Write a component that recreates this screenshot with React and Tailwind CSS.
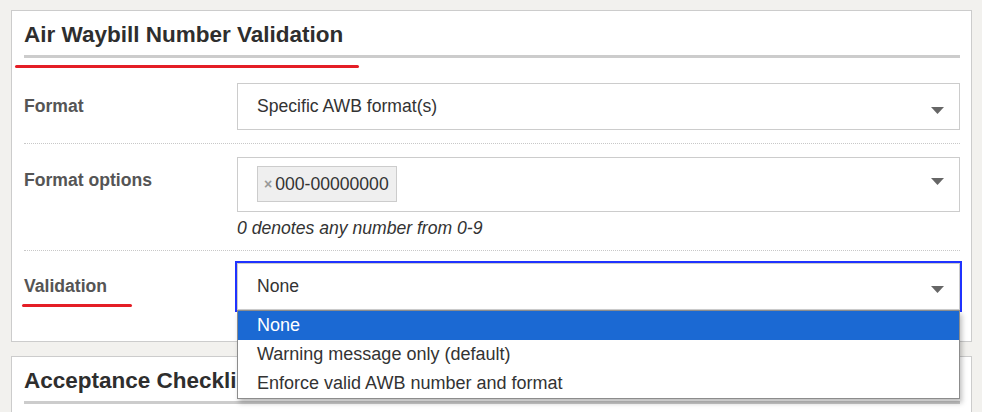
const Caret = ({ top }) => (
  <svg
    className="absolute right-[15px]"
    style={{ top }}
    width="13"
    height="7"
    viewBox="0 0 13 7"
  >
    <polygon points="0,0 13,0 6.5,7" fill="#666" />
  </svg>
);

const Select = ({ children, className = "", caretTop = 23 }) => (
  <div className={`relative border border-[#ccc] bg-white ${className}`}>
    {children}
    <Caret top={caretTop} />
  </div>
);

const Row = ({ label, children, className = "" }) => (
  <div className={`flex ${className}`}>
    <div className="w-[213px] shrink-0 pt-[11px] leading-[24px] font-bold text-[#555]">
      {label}
    </div>
    <div className="flex-1">{children}</div>
  </div>
);

export default function App() {
  return (
    <div className="min-h-screen bg-[#f2f1ee] pt-[10px] pl-[11px] pr-[10px] font-['Liberation_Sans',Arial,sans-serif] text-[17.6px] text-[#333]">
      {/* Panel 1 */}
      <div className="relative z-10 border border-[#ccc] bg-white pl-[12px] pr-[11px] pt-[11px] pb-[31px]">
        <h2 className="border-b-[3px] border-[#ccc] pb-[7px] text-[22.5px] font-bold leading-[26px] text-[#2e2e2e]">
          Air Waybill Number Validation
        </h2>

        {/* red annotation under title */}
        <div className="absolute left-[3px] top-[54px] h-[3px] w-[344px] rounded-full bg-[#e41e26]" />

        <Row label="Format" className="border-b border-dotted border-[#c8c8c8] pt-[25px] pb-[13px]">
          <Select className="flex h-[47px] items-center pl-[19px]" caretTop={23}>
            Specific AWB format(s)
          </Select>
        </Row>

        <Row label="Format options" className="border-b border-dotted border-[#c8c8c8] pt-[13px] pb-[10px]">
          <Select className="flex h-[55px] items-start pl-[19px] pt-[8px]" caretTop={20}>
            <span className="flex h-[36px] items-center border border-[#ccc] bg-[#efefef] pl-[6px] pr-[7px]">
              <span className="mr-[3px] text-[14px] font-bold leading-none text-[#999]">×</span>
              000-00000000
            </span>
          </Select>
          <p className="mt-[4px] italic leading-[24px]">0 denotes any number from 0-9</p>
        </Row>

        <Row label="Validation" className="pt-[12px]">
          <div className="relative">
            <Select
              className="flex h-[47px] items-center pl-[19px] outline-2 outline-[#1f33ff]"
              caretTop={22}
            >
              None
            </Select>
            <ul className="absolute left-0 right-0 top-[47px] z-20 border border-[#8c8c8c] bg-white text-[18px] shadow-[2px_4px_5px_rgba(0,0,0,0.25)]">
              <li className="flex h-[29px] items-center bg-[#1b69d3] pl-[19px] text-white">None</li>
              <li className="flex h-[29px] items-center pl-[19px]">Warning message only (default)</li>
              <li className="flex h-[29px] items-center pl-[19px]">Enforce valid AWB number and format</li>
            </ul>
          </div>
        </Row>

        {/* red annotation under Validation label */}
        <div className="absolute left-[10px] top-[293px] h-[3px] w-[110px] rounded-full bg-[#e41e26]" />
      </div>

      {/* Panel 2 */}
      <div className="mt-[14px] border border-[#ccc] bg-white pl-[12px] pr-[11px] pt-[11px] pb-[40px]">
        <h2 className="border-b-[3px] border-[#ccc] pb-[7px] text-[22.5px] font-bold leading-[26px] text-[#2e2e2e]">
          Acceptance Checklist
        </h2>
      </div>
    </div>
  );
}
